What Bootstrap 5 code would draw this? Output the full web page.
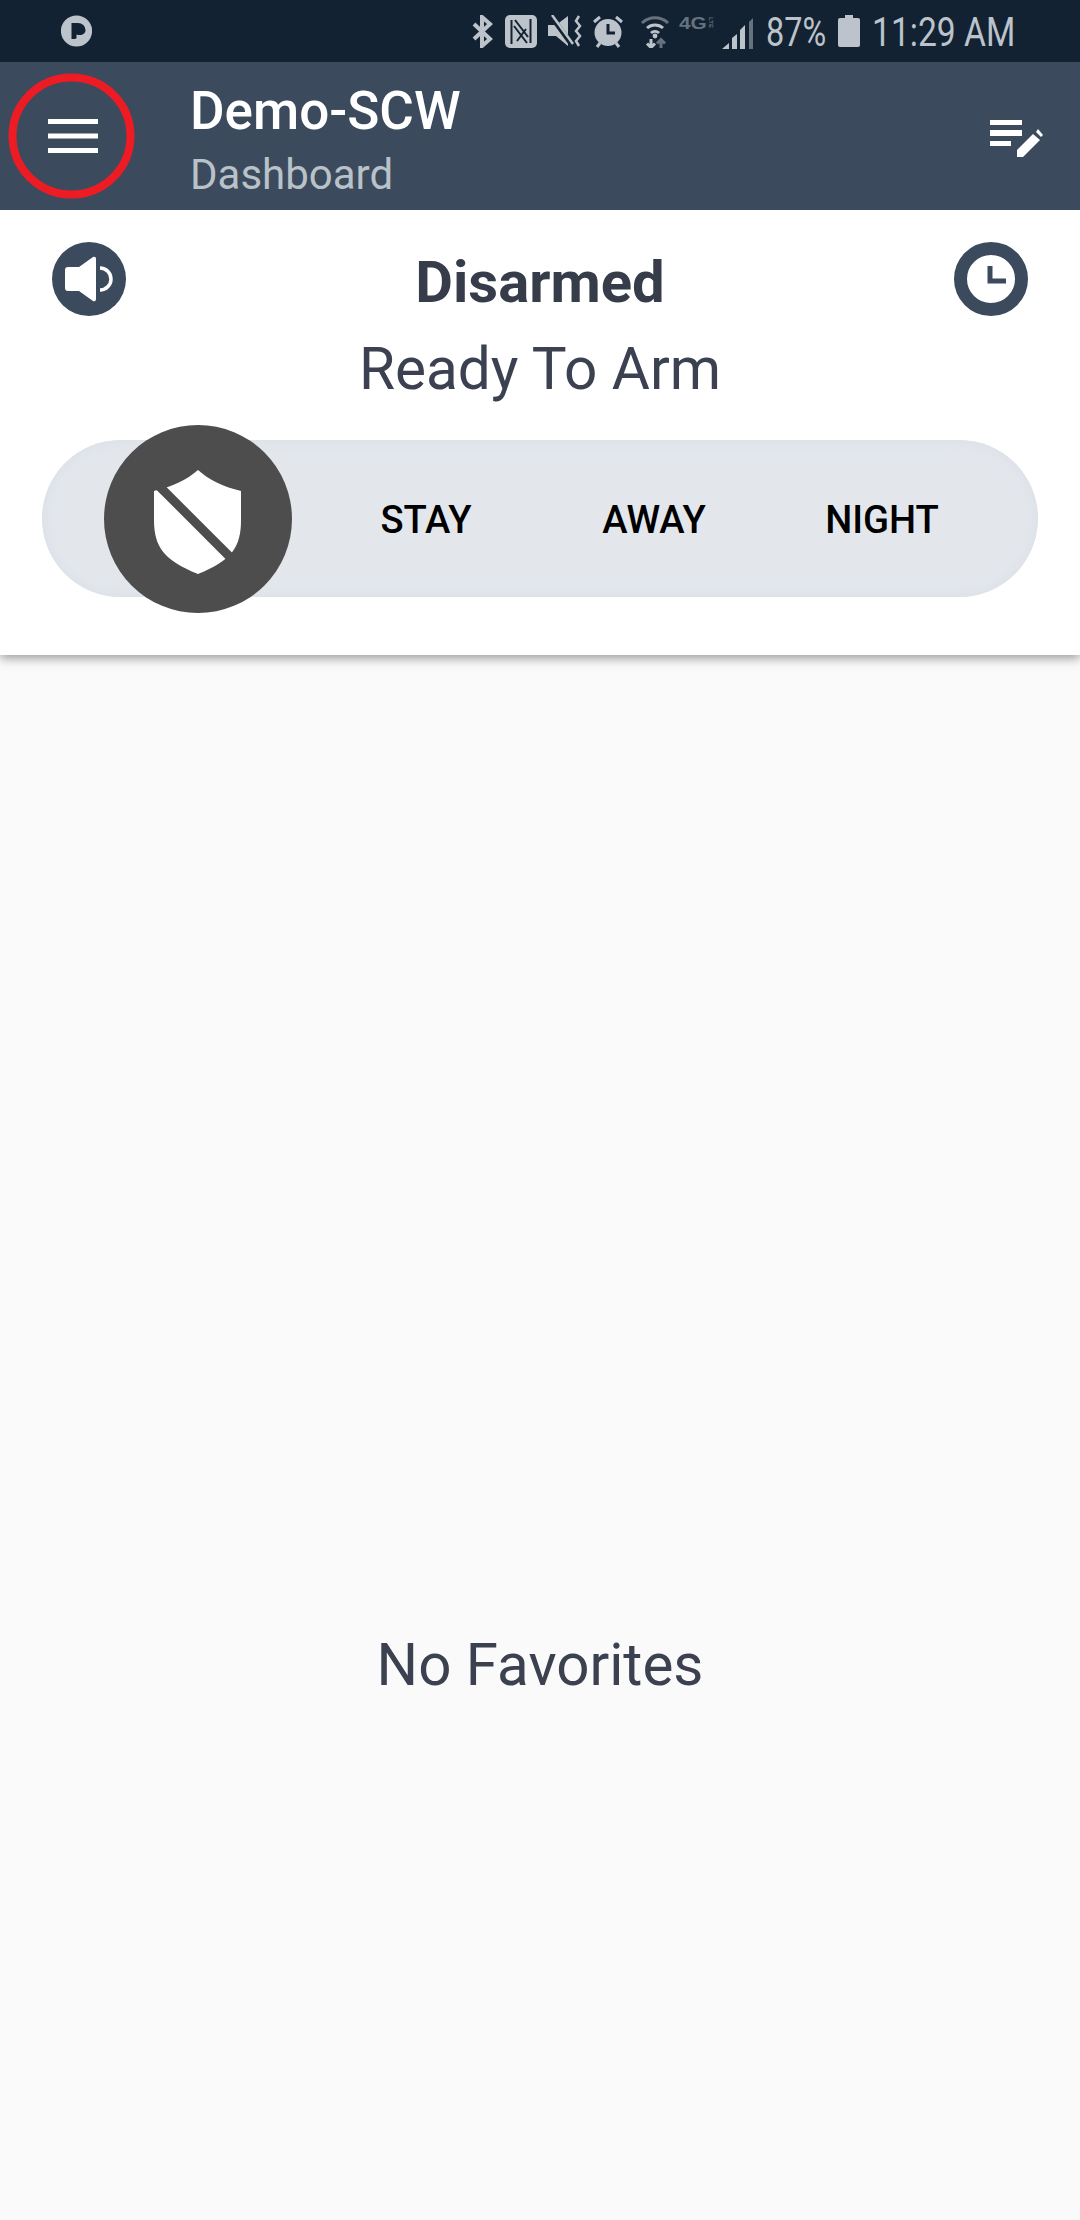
<!DOCTYPE html>
<html lang="en">
<head>
  <meta charset="UTF-8">
  <meta name="viewport" content="width=device-width, initial-scale=1.0">
  <title>Demo-SCW - Dashboard</title>
  <link href="https://cdn.jsdelivr.net/npm/bootstrap@5.3.0/dist/css/bootstrap.min.css" rel="stylesheet">
  <style>
    body {
      background-color: #fafafa;
      font-family: Roboto, "Liberation Sans", sans-serif;
      min-height: 2220px;
    }

    /* Phone status bar */
    .status-strip {
      height: 62px;
      background-color: #132233;
      color: #bcc3ca;
      padding-left: 61px;
      padding-right: 65px;
    }

    .status-strip svg {
      flex-shrink: 0;
    }

    .status-text {
      font-size: 40px;
      line-height: 1;
      margin-top: 3px;
      white-space: nowrap;
      transform-origin: left center;
    }

    .status-pct {
      width: 60px;
      margin-left: 13px;
      transform: scaleX(.81);
    }

    .status-time {
      width: 143px;
      margin-left: 12px;
      transform: scaleX(.84);
    }

    .gap-nfc { margin-left: 12px; }
    .gap-mute { margin-left: 11px; }
    .gap-alarm { margin-left: 11px; }
    .gap-wifi { margin-left: 17px; }
    .gap-battery { margin-left: 12px; }

    .status-net {
      width: 35px;
      height: 14px;
      margin-left: 9px;
      margin-right: 8px;
      margin-bottom: 14px;
      color: #66727e;
      font-family: "Liberation Sans", sans-serif;
      font-weight: 700;
    }

    .net-4g {
      width: 29px;
      font-size: 16px;
      line-height: 14px;
      transform: scaleX(1.3);
      transform-origin: left center;
    }

    .net-lte {
      font-size: 6px;
      line-height: 6px;
      writing-mode: vertical-rl;
    }

    /* App header */
    .app-header {
      height: 148px;
      background-color: #3b4a5c;
    }

    .menu-slot {
      width: 190px;
      padding-left: 48px;
    }

    .menu-ring {
      position: absolute;
      left: 8px;
      top: 11px;
    }

    .app-title {
      font-size: 53px;
      font-weight: 500;
      line-height: 59px;
      color: #fff;
      margin-top: 20px;
    }

    .app-subtitle {
      font-size: 42px;
      line-height: 50px;
      color: #b9c1c9;
      margin-top: 9px;
    }

    .header-edit {
      margin-right: 35px;
      padding-top: 4px;
    }

    /* Arm panel */
    .arm-panel {
      height: 445px;
      background-color: #fff;
      box-shadow: 0 3px 10px rgba(0, 0, 0, .4);
      padding: 32px 42px 0;
    }

    .panel-top {
      padding: 0 10px;
      height: 198px;
    }

    .round-btn {
      width: 74px;
      height: 74px;
      flex-shrink: 0;
    }

    .arm-state {
      font-size: 58px;
      font-weight: 700;
      line-height: 66px;
      color: #373c4a;
      margin-top: 7px;
    }

    .arm-ready {
      font-size: 58.500px;
      line-height: 66px;
      color: #3b4150;
      margin-top: 21px;
    }

    .arm-pill {
      height: 157px;
      padding: 0 42px;
      border-radius: 79px;
      background-color: #e3e7ec;
      box-shadow: inset 0 0 14px #d9dfe6;
    }

    .arm-cell {
      width: 228px;
      font-size: 38.200px;
      font-weight: 500;
      color: #000;
    }

    .arm-label {
      padding-top: 4px;
    }

    .arm-knob {
      width: 188px;
      height: 188px;
      flex-shrink: 0;
      background-color: #4d4d4d;
    }

    /* Favorites */
    .no-favorites {
      padding-top: 977px;
      font-size: 58.300px;
      line-height: 66px;
      color: #3b4150;
    }
  </style>
</head>
<body>

  <!-- Status bar -->
  <div class="status-strip d-flex align-items-center">
    <svg width="31" height="32" viewBox="0 0 31 32" class="me-auto">
      <circle cx="15.500" cy="16" r="15.600" fill="#bcc3ca"/>
      <path d="M10.500 8H17a7.500 7 0 0 1 7.500 7c0 4.500-4.500 6-9 4.500V23a2 2 0 0 1-2 1h-3z" fill="#132233"/>
    </svg>
    <svg width="21" height="33" viewBox="0 0 21 33" fill="none" stroke="#bcc3ca" stroke-width="4">
      <path d="M2 9l16 15-8 7V2l8 7L2 24"/>
    </svg>
    <svg class="gap-nfc" width="32" height="33" viewBox="0 0 32 33">
      <rect width="32" height="33" rx="5" fill="#bcc3ca"/>
      <path d="M6.500 29V5M25.500 28V4M10 5l13 17M22 28L9 11M12 26l9-12" fill="none" stroke="#132233" stroke-width="2"/>
    </svg>
    <svg class="gap-mute" width="34" height="32" viewBox="0 0 34 32">
      <path d="M0 10h8L20 1v30L8 21H0z" fill="#bcc3ca"/>
      <path d="M3 1l21 29" stroke="#132233" stroke-width="5"/>
      <path d="M4 0l21 29" stroke="#bcc3ca" stroke-width="2.500"/>
      <path d="M31 1l-3 5 4 5-4 5 4 5-4 5 3 5" fill="none" stroke="#bcc3ca" stroke-width="2.500"/>
    </svg>
    <svg class="gap-alarm" width="30" height="33" viewBox="0 0 30 33">
      <circle cx="15" cy="17.500" r="13.500" fill="#bcc3ca"/>
      <path d="M15 9v9h7" fill="none" stroke="#132233" stroke-width="3"/>
      <path d="M1 7l6-5M29 7l-6-5M4 32l3-4M26 32l-3-4" stroke="#bcc3ca" stroke-width="3"/>
    </svg>
    <svg class="gap-wifi" width="30" height="33" viewBox="0 0 30 33" fill="none">
      <path d="M2 8a19 19 0 0 1 26 0" stroke="#66727e" stroke-width="3"/>
      <path d="M7 13a12 12 0 0 1 16 0" stroke="#bcc3ca" stroke-width="3"/>
      <path d="M11 18a6 6 0 0 1 8 0" stroke="#bcc3ca" stroke-width="3"/>
      <circle cx="15" cy="21" r="2.400" fill="#bcc3ca"/>
      <path d="M11 24v9M7 28.500l4 4 4-4" stroke="#bcc3ca" stroke-width="3"/>
      <path d="M21 33v-9M17 28.500l4-4 4 4" stroke="#66727e" stroke-width="3"/>
    </svg>
    <div class="status-net d-flex justify-content-between">
      <span class="net-4g">4G</span>
      <span class="net-lte">LTE</span>
    </div>
    <svg width="31" height="31" viewBox="0 0 31 31" class="mt-1">
      <path d="M0 31l7-6v6zM10 31V20l5-4v15zM18 31V12l5-5v24z" fill="#bcc3ca"/>
      <path d="M27 31V4l4-4v31z" fill="#66727e"/>
    </svg>
    <span class="status-text status-pct">87%</span>
    <svg class="gap-battery" width="22" height="32" viewBox="0 0 22 32">
      <path d="M7 0h8v3h5a2 2 0 0 1 2 2v25a2 2 0 0 1-2 2H2a2 2 0 0 1-2-2V5a2 2 0 0 1 2-2h5z" fill="#bcc3ca"/>
    </svg>
    <span class="status-text status-time">11:29 AM</span>
  </div>

  <!-- Header -->
  <header class="app-header d-flex position-relative">
    <svg class="menu-ring" width="127" height="126" viewBox="0 0 127 126" fill="none">
      <ellipse cx="63.500" cy="63" rx="59" ry="58.500" stroke="#ed1c24" stroke-width="8"/>
    </svg>
    <div class="menu-slot d-flex align-items-center flex-shrink-0">
      <svg width="50" height="37" viewBox="0 0 50 37" fill="#fff" class="position-relative">
        <rect y="1" width="50" height="5"/>
        <rect y="15.500" width="50" height="5"/>
        <rect y="30" width="50" height="5"/>
      </svg>
    </div>
    <div class="flex-grow-1">
      <div class="app-title">Demo-SCW</div>
      <div class="app-subtitle">Dashboard</div>
    </div>
    <div class="header-edit d-flex align-items-center">
      <svg width="55" height="38" viewBox="0 0 55 38" fill="#fff">
        <rect x="0" y="1" width="32" height="5"/>
        <rect x="0" y="11" width="32" height="6"/>
        <rect x="0" y="22" width="21" height="5"/>
        <path d="M27 38v-7l16-16 7 6-17 17z"/>
        <path d="M46 13l2-3 5 6-2 2z"/>
      </svg>
    </div>
  </header>

  <!-- Arm state panel -->
  <section class="arm-panel">
    <div class="panel-top d-flex justify-content-between align-items-start">
      <svg class="round-btn" viewBox="0 0 74 74">
        <circle cx="37" cy="37" r="37" fill="#3b4a5c"/>
        <path d="M16 25h11l14-10a2 2 0 0 1 3 2v40a2 2 0 0 1-3 2L27 49H16a3 3 0 0 1-3-3V28a3 3 0 0 1 3-3z" fill="#fff"/>
        <path d="M48 26a11 11 0 0 1 0 22" fill="none" stroke="#fff" stroke-width="3.500"/>
      </svg>
      <div class="flex-grow-1 text-center">
        <div class="arm-state">Disarmed</div>
        <div class="arm-ready">Ready To Arm</div>
      </div>
      <svg class="round-btn" viewBox="0 0 74 74">
        <circle cx="37" cy="37" r="30.500" fill="#fff" stroke="#3b4a5c" stroke-width="13"/>
        <path d="M36 24v15h16" fill="none" stroke="#3b4a5c" stroke-width="5"/>
      </svg>
    </div>
    <div class="arm-pill d-flex align-items-center">
      <div class="arm-cell d-flex align-items-center justify-content-center">
        <div class="arm-knob rounded-circle">
          <svg width="188" height="188" viewBox="0 0 188 188">
            <path d="M94 45c11 10 26 17 43 21v29c0 27-9 40-43 54-34-14-44-27-44-54V66c17-4 33-11 44-21z" fill="#fff"/>
            <path d="M48 54l84 84" stroke="#4d4d4d" stroke-width="9"/>
          </svg>
        </div>
      </div>
      <div class="arm-cell arm-label text-center">STAY</div>
      <div class="arm-cell arm-label text-center">AWAY</div>
      <div class="arm-cell arm-label text-center">NIGHT</div>
    </div>
  </section>

  <!-- Favorites -->
  <div class="no-favorites text-center">No Favorites</div>

  <script src="https://cdn.jsdelivr.net/npm/bootstrap@5.3.0/dist/js/bootstrap.bundle.min.js"></script>
</body>
</html>
